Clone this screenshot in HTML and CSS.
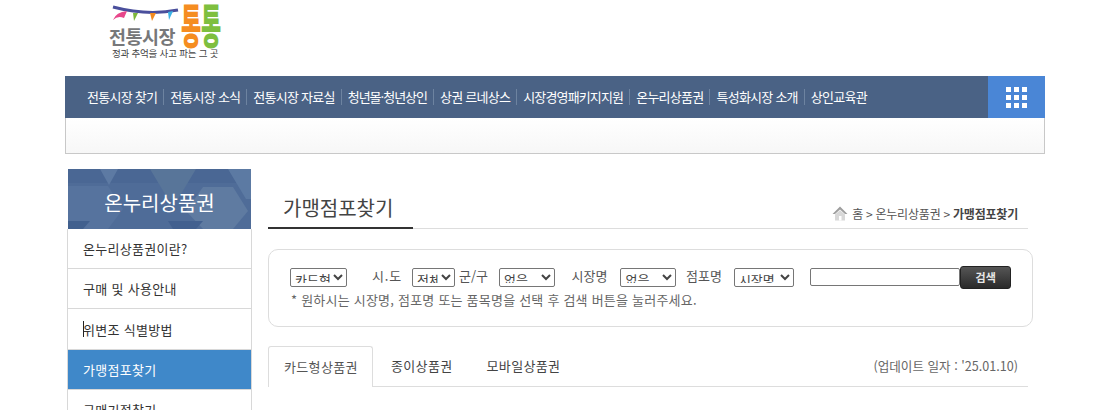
FILE: index.html
```html
<!DOCTYPE html>
<html lang="ko">
<head>
    <meta charset="UTF-8">
    <meta name="viewport" content="width=device-width, initial-scale=1.0">
    <title>가맹점포찾기</title>
    <link rel="stylesheet" href="styles.css">
</head>
<body>
    <div class="wrap">
        <header class="top">
            <svg class="logo" width="120" height="60" viewBox="0 0 120 60">
                <path d="M4 5 Q38 14 69 8" fill="none" stroke="#4a4f9c" stroke-width="3"/>
                <path d="M4 18 Q7 10 18 9 L15 16 Q9 13 4 18 Z" fill="#e8478b"/>
                <path d="M24 11 L29 11 L25 19 Z" fill="#7cb63c"/>
                <path d="M41 11 L47 11 L43 19 Z" fill="#f28a1f"/>
                <path d="M59 10 L64 9 L60 18 Z" fill="#3bb3e6"/>
                <text class="logo-name" x="0" y="42">전통시장</text>
                <text class="logo-big" transform="translate(72 41) scale(1 2.1)" fill="#f58d21">통</text>
                <text class="logo-big" transform="translate(92 41) scale(1 2.1)" fill="#7ebf3f">통</text>
                <text class="logo-sub" x="3" y="55">정과 추억을 사고 파는 그 곳</text>
            </svg>
        </header>

        <nav class="gnb">
            <div class="gnb-bar">
                <ul class="gnb-list">
                    <li>전통시장 찾기</li>
                    <li>전통시장 소식</li>
                    <li>전통시장 자료실</li>
                    <li class="tight">청년몰·청년상인</li>
                    <li>상권 르네상스</li>
                    <li class="tight2">시장경영패키지지원</li>
                    <li>온누리상품권</li>
                    <li>특성화시장 소개</li>
                    <li>상인교육관</li>
                </ul>
                <div class="gnb-all">
                    <div class="dots">
                        <i></i><i></i><i></i><i></i><i></i><i></i><i></i><i></i><i></i>
                    </div>
                </div>
            </div>
            <div class="gnb-sub"></div>
        </nav>

        <div class="content">
            <aside class="side">
                <div class="side-head">
                    <svg class="side-bg" width="183" height="60" viewBox="0 0 183 60">
                        <rect width="183" height="14" fill="#4a6794"/>
                        <polygon points="32,0 50,0 41,16" fill="#5d7aa3"/>
                        <polygon points="82,0 128,0 110,30 100,30" fill="#587599"/>
                        <polygon points="160,0 183,0 183,30 178,30" fill="#5c7aa3"/>
                        <polygon points="0,17 40,17 55,40 40,60 0,60" fill="#56739e"/>
                        <polygon points="135,18 165,18 180,42 165,60 135,60 118,42" fill="#5f7ba1"/>
                        <polygon points="0,52 22,52 15,60 0,60" fill="#41608e"/>
                        <polygon points="100,52 135,52 128,60 105,60" fill="#42608f"/>
                    </svg>
                    <h2>온누리상품권</h2>
                </div>
                <ul class="side-menu">
                    <li>온누리상품권이란?</li>
                    <li>구매 및 사용안내</li>
                    <li class="cursor">위변조 식별방법</li>
                    <li class="on">가맹점포찾기</li>
                    <li>구매기점찾기</li>
                </ul>
            </aside>

            <main class="main">
                <div class="title-row">
                    <h1>가맹점포찾기</h1>
                    <div class="crumb">
                        <svg width="16" height="15" viewBox="0 0 16 15">
                            <path d="M0.5 8 L8 0.5 L15.5 8 L13 8 L8 3.5 L3 8 Z" fill="#9e9e9e"/>
                            <path d="M3 8.5 L8 4.2 L13 8.5 V14.5 H3 Z" fill="#d8d8d8"/>
                            <rect x="7" y="10" width="2.5" height="4.5" fill="#fff"/>
                        </svg>
                        <span>홈<em>&gt;</em>온누리상품권<em>&gt;</em><b>가맹점포찾기</b></span>
                    </div>
                </div>

                <form class="search">
                    <div class="search-row">
                        <select class="sel sel-type"><option>카드형상품권</option></select>
                        <label class="lb lb-sido">시.도</label>
                        <select class="sel sel-sido"><option>전체</option></select>
                        <label class="lb lb-gu">군/구</label>
                        <select class="sel sel-gu"><option>없음</option></select>
                        <label class="lb lb-market">시장명</label>
                        <select class="sel sel-gu"><option>없음</option></select>
                        <label class="lb lb-store">점포명</label>
                        <select class="sel sel-name"><option>시장명</option></select>
                        <input class="keyword" type="text">
                        <button class="btn" type="button">검색</button>
                    </div>
                    <p class="hint">* 원하시는 시장명, 점포명 또는 품목명을 선택 후 검색 버튼을 눌러주세요.</p>
                </form>

                <div class="tabs">
                    <a class="tab on">카드형상품권</a>
                    <a class="tab">종이상품권</a>
                    <a class="tab">모바일상품권</a>
                    <span class="update">(업데이트 일자 : '25.01.10)</span>
                </div>
            </main>
        </div>
    </div>
    <div class="fade"></div>
</body>
</html>
```

FILE: styles.css
```css
html, body {
    margin: 0;
    height: 417px;
    overflow: hidden;
    background: #fff;
}
body {
    font-family: "Noto Sans CJK KR", "Noto Sans", sans-serif;
    color: #333;
}
ul { list-style: none; margin: 0; padding: 0; }

.wrap { width: 980px; margin-left: 65px; }

.top { height: 76px; }
.logo { display: block; margin-left: 44px; padding-top: 2px; }
.logo-name { font-size: 18.5px; font-weight: 700; fill: #77787a; letter-spacing: -0.5px; }
.logo-big { font-size: 22px; font-weight: 900; }
.logo-sub { font-size: 9.5px; fill: #444; letter-spacing: -0.2px; }

.gnb-bar { display: flex; height: 42px; background: #4a6285; }
.gnb-list { display: flex; flex: 1; align-items: center; padding-left: 22px; }
.gnb-list li {
    font-size: 13px;
    line-height: 16px;
    color: #fff;
    letter-spacing: -0.75px;
    white-space: nowrap;
    padding-right: 6px;
    margin-right: 6px;
    border-right: 1px solid #6d83a0;
}
.gnb-list li.tight { letter-spacing: -1px; }
.gnb-list li.tight2 { letter-spacing: -0.85px; }
.gnb-list li:last-child { border-right: none; }
.gnb-all {
    width: 57px;
    background: #4a86d6;
    display: flex;
    align-items: center;
    justify-content: center;
}
.dots { display: grid; grid-template-columns: repeat(3, 5px); grid-auto-rows: 5px; gap: 3px; }
.dots i { background: #fff; }
.gnb-sub {
    height: 35px;
    border: 1px solid #c8c8c8;
    border-top: none;
    background: linear-gradient(#fff, #f7f7f7);
}

.content { display: flex; margin-top: 15px; padding-left: 2px; }

.side { width: 185px; flex: none; }
.side-head { position: relative; width: 183px; margin-left: 1px; height: 60px; background: #4f6c98; overflow: hidden; }
.side-bg { position: absolute; left: 0; top: 0; }
.side-head h2 {
    position: relative;
    margin: 0;
    text-align: center;
    font-size: 20px;
    font-weight: 400;
    line-height: 68px;
    color: #fff;
}
.side-menu { border-left: 1px solid #d8d8d8; border-right: 1px solid #d8d8d8; }
.side-menu li {
    position: relative;
    box-sizing: border-box;
    height: 40px;
    line-height: 39px;
    padding-left: 15px;
    font-size: 13px;
    letter-spacing: 0.3px;
    color: #333;
    border-bottom: 1px solid #d8d8d8;
}
.side-menu li.on { background: #3f88c9; color: #fff; }
.side-menu li.cursor { height: 41px; line-height: 41px; }
.side-menu li.cursor::before {
    content: "";
    position: absolute;
    left: 15px;
    top: 12px;
    width: 1px;
    height: 16px;
    background: #222;
}

.main { width: 765px; margin-left: 16px; }

.title-row {
    display: flex;
    justify-content: space-between;
    align-items: flex-end;
    width: 760px;
    height: 60px;
    box-sizing: border-box;
    border-bottom: 1px solid #ddd;
}
.title-row h1 {
    margin: 0 0 -1px;
    width: 145px;
    box-sizing: border-box;
    padding: 0 0 5px 15px;
    font-size: 20px;
    line-height: 28px;
    font-weight: 400;
    color: #444;
    border-bottom: 2px solid #333;
}
.crumb {
    display: flex;
    align-items: center;
    gap: 4px;
    padding: 0 10px 6px 0;
    font-size: 12px;
    letter-spacing: -0.2px;
    color: #555;
}
.crumb em { font-style: normal; margin: 0 3px; }
.crumb b { color: #444; }

.search {
    margin-top: 20px;
    height: 78px;
    box-sizing: border-box;
    padding: 15px 21px 0;
    border: 1px solid #ddd;
    border-radius: 10px;
}
.search-row { display: flex; align-items: center; height: 24px; }
.sel {
    height: 19px;
    box-sizing: border-box;
    padding: 0 0 3px;
    font-family: inherit;
    font-size: 13px;
    color: #444;
    background: #fff;
    border: 1px solid #767676;
    border-radius: 2px;
}
.sel-type { width: 57px; }
.sel-sido { width: 43px; }
.sel-gu { width: 56px; }
.sel-name { width: 61px; }
.lb { font-size: 13px; color: #555; white-space: nowrap; margin-top: -4px; }
.lb-sido { margin-left: 25px; margin-right: 10px; letter-spacing: 0.8px; }
.lb-gu { margin-left: 4px; margin-right: 11px; }
.lb-market { margin-left: 17px; margin-right: 13px; }
.lb-store { margin-left: 10px; margin-right: 12px; }
.keyword {
    width: 150px;
    height: 18px;
    box-sizing: border-box;
    margin-left: 16px;
    padding: 0;
    border: 1px solid #767676;
    border-radius: 2px;
}
.btn {
    width: 51px;
    height: 23px;
    padding: 0;
    font-family: inherit;
    font-size: 11px;
    font-weight: 700;
    color: #e8e8e8;
    border: 1px solid #222;
    border-radius: 3px;
    background: linear-gradient(#555, #2a2a2a);
}
.hint { margin: 2px 0 0 1px; font-size: 13px; line-height: 18px; letter-spacing: 0.22px; color: #666; }

.tabs {
    display: flex;
    align-items: center;
    width: 760px;
    height: 41px;
    box-sizing: border-box;
    margin-top: 19px;
    border-bottom: 1px solid #ddd;
}
.tab {
    font-size: 13px;
    letter-spacing: 0.35px;
    color: #444;
    padding: 0 15px;
    margin: 0 4px 2px 0;
    white-space: nowrap;
}
.tab.on {
    width: 105px;
    height: 41px;
    box-sizing: border-box;
    padding-right: 0;
    line-height: 39px;
    margin: 0 3px 0 0;
    background: #fff;
    border: 1px solid #ddd;
    border-bottom: none;
    border-radius: 3px 3px 0 0;
    color: #555;
}
.update { margin: 0 0 2px auto; padding-right: 10px; font-size: 12.6px; color: #666; }

.fade {
    position: fixed;
    left: 0;
    right: 0;
    bottom: 0;
    height: 7px;
    background: #fff;
}
```
